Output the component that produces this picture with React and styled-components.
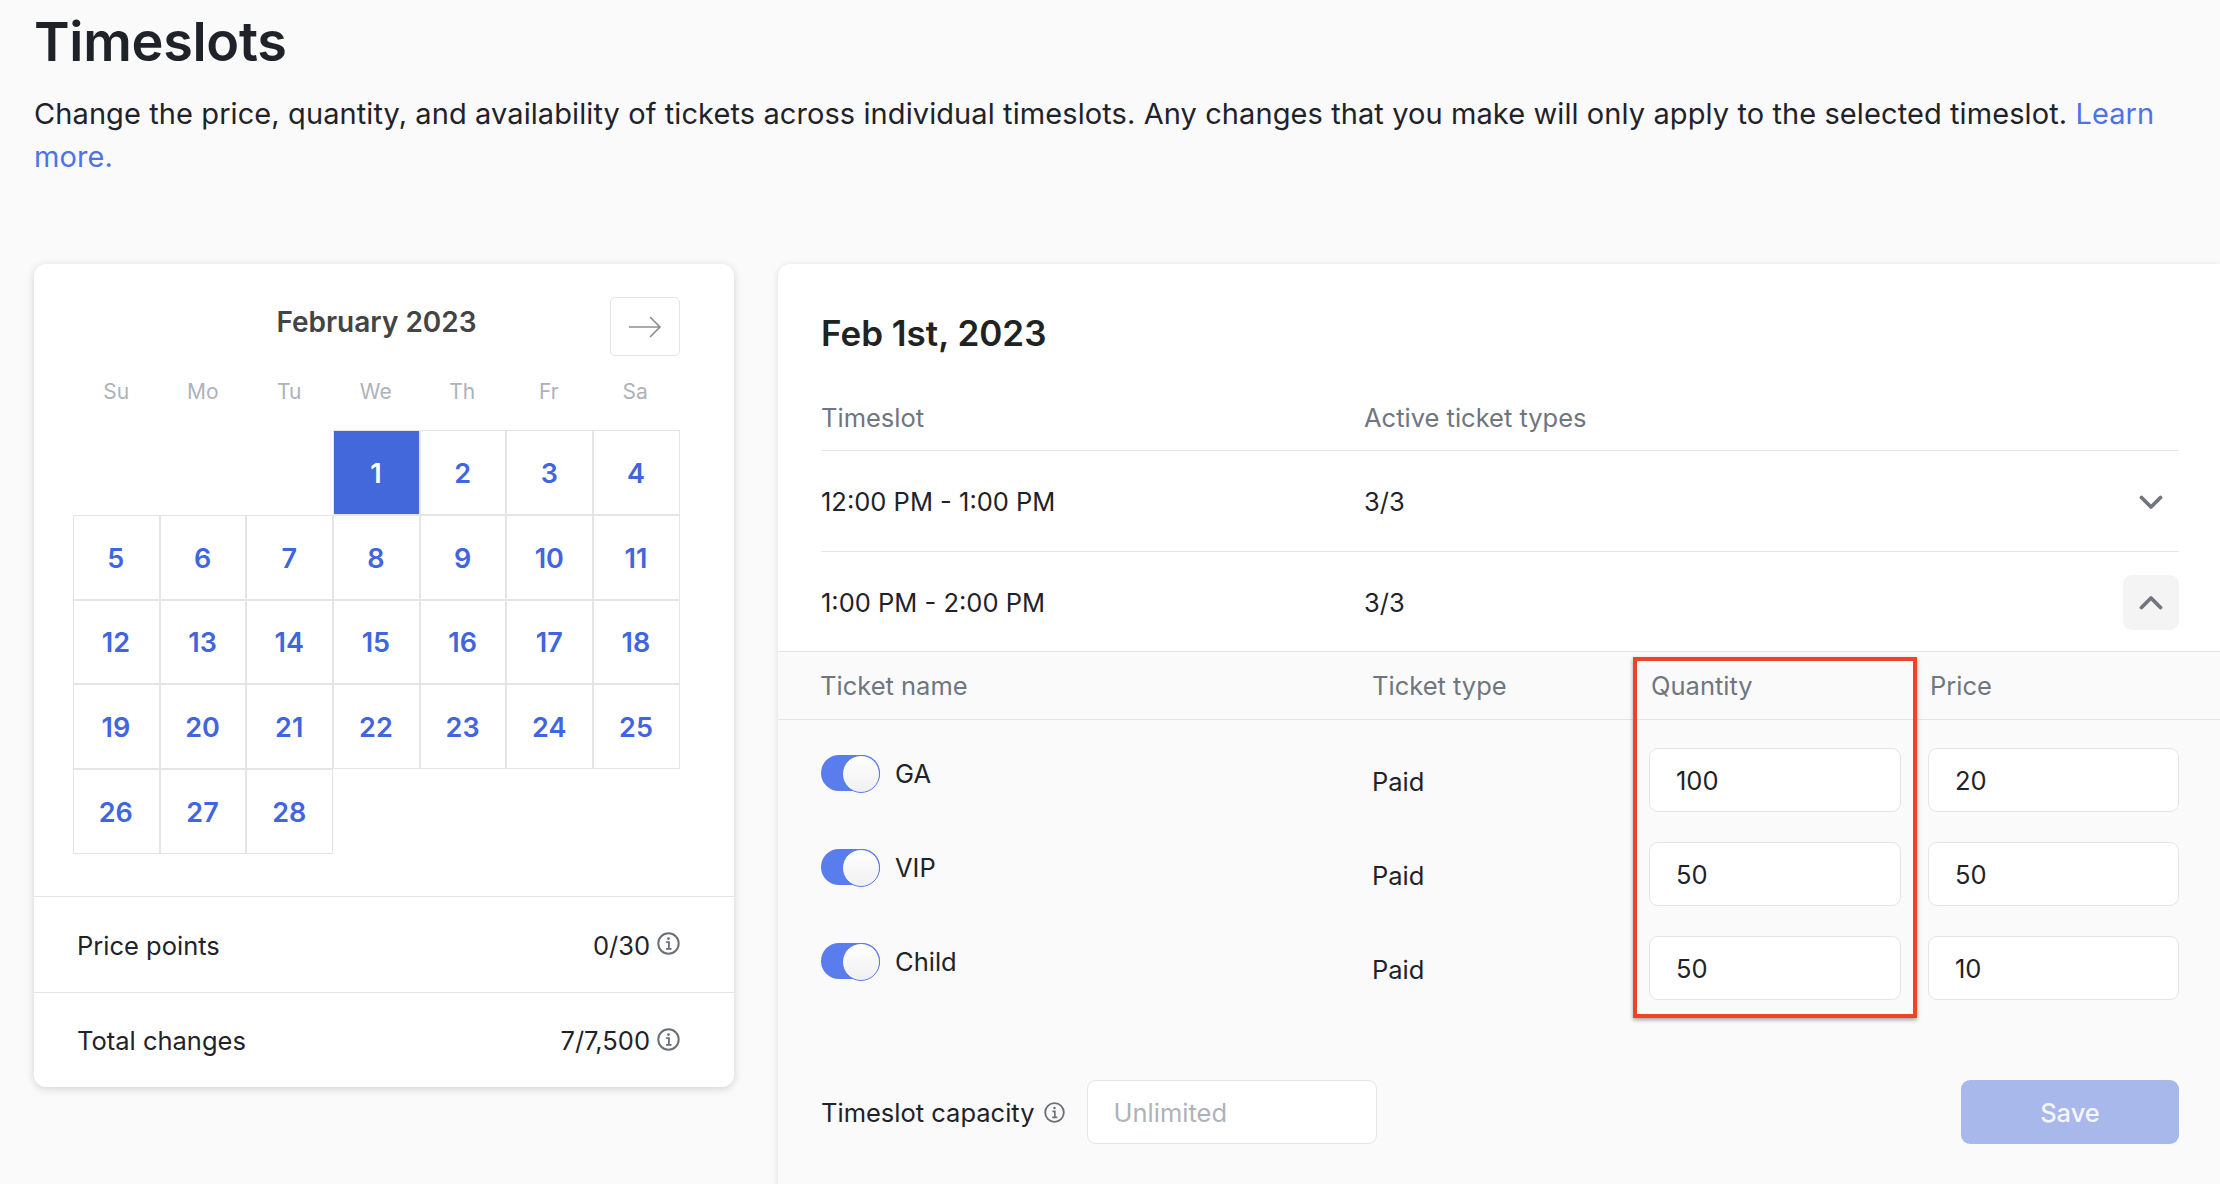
import React from 'react'
import styled, { createGlobalStyle } from 'styled-components'

const GlobalStyle = createGlobalStyle`
  html, body {
    margin: 0;
    background: #fafafa;
    overflow: hidden;
  }
  * {
    box-sizing: border-box;
  }
`

const Colors = {
  ink: '#1f2329',
  muted: '#6f7680',
  faint: '#aeb2b9',
  line: '#e5e5e5',
  blue: '#3f65e0',
}

const Page = styled.div`
  width: 2220px;
  height: 1184px;
  overflow: hidden;
  padding-left: 34px;
  background: #fafafa;
  color: ${Colors.ink};
  font-family: Inter, "Liberation Sans", sans-serif;
  font-size: 25.5px;
`

const Title = styled.h1`
  margin: 0;
  height: 92px;
  padding-top: 10px;
  font-size: 54px;
  line-height: 63px;
  font-weight: 600;
  letter-spacing: -0.3px;
`

const Intro = styled.p`
  margin: 0 0 86px;
  width: 2140px;
  font-size: 29px;
  line-height: 43px;
  letter-spacing: 0.09px;
`

const Link = styled.a`
  color: #4f73e6;
`

const Columns = styled.div`
  display: flex;
  align-items: flex-start;
  gap: 44px;
`

const CalendarCard = styled.section`
  flex: none;
  width: 700px;
  background: #fff;
  border-radius: 12px;
  box-shadow: 0 2px 8px rgba(0, 0, 0, 0.16);
`

const CalendarBody = styled.div`
  padding: 33px 54px 42px 39px;
`

const MonthBar = styled.div`
  display: grid;
  grid-template-columns: 1fr auto 1fr;
  align-items: center;
`

const MonthName = styled.div`
  grid-column: 2;
  margin-bottom: 10px;
  font-size: 28px;
  font-weight: 600;
  color: #444;
`

const ArrowButton = styled.button`
  grid-column: 3;
  justify-self: end;
  display: flex;
  align-items: center;
  justify-content: center;
  width: 70px;
  height: 59px;
  padding: 0;
  background: #fff;
  border: 1px solid ${Colors.line};
  border-radius: 5px;
`

const Weekdays = styled.div`
  display: grid;
  grid-template-columns: repeat(7, 86.5px);
  height: 74px;
  padding-bottom: 3px;
  align-items: center;
`

const Weekday = styled.div`
  text-align: center;
  font-size: 21px;
  color: ${Colors.faint};
`

const Days = styled.div`
  display: grid;
  grid-template-columns: repeat(7, 86.7px);
  grid-auto-rows: 84.8px;
`

const Day = styled.div`
  grid-column-start: ${(props) => props.$start || 'auto'};
  display: flex;
  align-items: center;
  justify-content: center;
  padding: 2px 1px 0 0;
  border: 1px solid ${Colors.line};
  font-size: 27px;
  font-weight: 600;
  background: ${(props) => (props.$selected ? '#4268dc' : '#fff')};
  color: ${(props) => (props.$selected ? '#fff' : Colors.blue)};
`

const Stat = styled.div`
  display: flex;
  align-items: center;
  justify-content: space-between;
  height: ${(props) => props.$height}px;
  padding: 2px 54px 0 43px;
  border-top: 1px solid ${Colors.line};
`

const StatValue = styled.div`
  display: flex;
  align-items: center;
  gap: 7px;

  svg {
    margin-bottom: 3px;
  }
`

const DetailCard = styled.section`
  flex: none;
  width: 1442px;
  background: #fff;
  border-radius: 12px 0 0 0;
  box-shadow: 0 1px 6px rgba(0, 0, 0, 0.12);
`

const DetailHead = styled.div`
  padding: 47px 41px 0 43px;
`

const DateTitle = styled.h2`
  margin: 0 0 29px;
  font-size: 35px;
  line-height: 44px;
  font-weight: 600;
  color: #222;
`

const SlotRow = styled.div`
  display: grid;
  grid-template-columns: 543px 1fr 56px;
  align-items: center;
  height: ${(props) => props.$height}px;
  padding-top: ${(props) => (props.$flat ? '2px' : '0')};
  color: ${(props) => (props.$head ? Colors.muted : Colors.ink)};
  border-bottom: ${(props) => (props.$flat ? 'none' : `1px solid ${Colors.line}`)};
`

const ChevronButton = styled.div`
  display: flex;
  align-items: center;
  justify-content: center;
  width: 56px;
  height: 55px;
  padding-top: ${(props) => (props.$open ? '0' : '3px')};
  border-radius: 9px;
  background: ${(props) => (props.$open ? '#f4f4f4' : 'transparent')};
`

const TicketSection = styled.div`
  position: relative;
  background: #fafafa;
  border-top: 1px solid ${Colors.line};
  padding-bottom: 60px;
`

const TicketHead = styled.div`
  display: grid;
  grid-template-columns: 552px 279px 279px 1fr;
  align-items: center;
  height: 68px;
  padding-left: 42px;
  color: ${Colors.muted};
  border-bottom: 1px solid ${Colors.line};
`

const TicketList = styled.div`
  display: grid;
  row-gap: 30px;
  padding: 28px 41px 0 43px;
`

const TicketRow = styled.div`
  display: grid;
  grid-template-columns: 551px 277px 1fr;
  height: 64px;
`

const TicketName = styled.div`
  display: flex;
  align-items: center;
  gap: 15px;
  height: 36px;
  margin-top: 7px;
`

const TicketType = styled.div`
  display: flex;
  align-items: center;
  padding-top: 2px;
`

const FieldPair = styled.div`
  display: grid;
  grid-template-columns: 252px 251px;
  column-gap: 27px;
`

const Toggle = styled.div`
  position: relative;
  flex: none;
  width: 59px;
  height: 36px;
  border-radius: 18px;
  background: #5a7ded;

  &::after {
    content: '';
    position: absolute;
    top: 0;
    right: 0;
    width: 36px;
    height: 36px;
    border-radius: 50%;
    border: 1px solid #5a7ded;
    background: linear-gradient(#ffffff, #f0f0f0);
  }
`

const Field = styled.input`
  display: block;
  width: ${(props) => props.$width || '100%'};
  height: 64px;
  padding: 1px 26px 0;
  background: #fff;
  border: 1px solid ${Colors.line};
  border-radius: 9px;
  outline: none;
  color: ${Colors.ink};
  font-family: inherit;
  font-size: 25.5px;

  &::placeholder {
    color: ${Colors.faint};
    opacity: 1;
  }
`

const CapacityBar = styled.div`
  display: flex;
  align-items: center;
  justify-content: space-between;
  margin-top: 80px;
  padding: 0 41px 0 43px;
`

const Capacity = styled.div`
  display: flex;
  align-items: center;
`

const CapacityLabel = styled.span`
  margin-right: 9px;
`

const CapacityField = styled(Field)`
  margin-left: 22px;
`

const SaveButton = styled.button`
  width: 218px;
  height: 64px;
  border: none;
  border-radius: 9px;
  background: #a9b8ea;
  color: #f4f6fe;
  font-family: inherit;
  font-size: 25.5px;
  font-weight: 500;
`

// the annotation somebody drew on top of the screenshot
const Highlight = styled.div`
  position: absolute;
  top: 5px;
  left: 855px;
  width: 284px;
  height: 361px;
  border: 4px solid #ee4325;
  box-shadow: 0 2px 4px rgba(0, 0, 0, 0.35);
  pointer-events: none;
`

const ArrowIcon = () => (
  <svg width="34" height="24" viewBox="0 0 34 24" fill="none" stroke="#8a8d92" strokeWidth="1.6">
    <path d="M1 12H32M22 2L32 12L22 22" />
  </svg>
)

const InfoIcon = ({ size = 23 }) => (
  <svg width={size} height={size} viewBox="0 0 23 23" fill="none" stroke="#6a7078">
    <circle cx="11.5" cy="11.5" r="10.2" strokeWidth="2" />
    <circle cx="11.5" cy="6.6" r="1.4" fill="#6a7078" stroke="none" />
    <path d="M9.2 10.2H11.9V16.6M9 16.8H14.6" strokeWidth="1.8" />
  </svg>
)

const Chevron = ({ up }) => (
  <svg width="24" height="15" viewBox="0 0 24 15" fill="none" stroke="#6f7680" strokeWidth="3.8" strokeLinecap="round" strokeLinejoin="round">
    <path d={up ? 'M2.5 12.5L12 3L21.5 12.5' : 'M2.5 2.5L12 12L21.5 2.5'} />
  </svg>
)

const weekdays = ['Su', 'Mo', 'Tu', 'We', 'Th', 'Fr', 'Sa']
const days = Array.from({ length: 28 }, (_, i) => i + 1)

const tickets = [
  { name: 'GA', quantity: '100', price: '20' },
  { name: 'VIP', quantity: '50', price: '50' },
  { name: 'Child', quantity: '50', price: '10' },
]

const App = () => {
  return (
    <Page>
      <GlobalStyle />
      <Title>Timeslots</Title>
      <Intro>
        Change the price, quantity, and availability of tickets across individual timeslots. Any changes that you make will only apply to the selected timeslot. <Link>Learn more.</Link>
      </Intro>
      <Columns>
        <CalendarCard>
          <CalendarBody>
            <MonthBar>
              <MonthName>February 2023</MonthName>
              <ArrowButton><ArrowIcon /></ArrowButton>
            </MonthBar>
            <Weekdays>
              {weekdays.map((day) => <Weekday key={day}>{day}</Weekday>)}
            </Weekdays>
            <Days>
              {days.map((day) => (
                <Day key={day} $start={day === 1 ? 4 : undefined} $selected={day === 1}>{day}</Day>
              ))}
            </Days>
          </CalendarBody>
          <Stat $height={96}>
            Price points
            <StatValue>0/30 <InfoIcon /></StatValue>
          </Stat>
          <Stat $height={95}>
            Total changes
            <StatValue>7/7,500 <InfoIcon /></StatValue>
          </Stat>
        </CalendarCard>
        <DetailCard>
          <DetailHead>
            <DateTitle>Feb 1st, 2023</DateTitle>
            <SlotRow $head $height={67}>
              <div>Timeslot</div>
              <div>Active ticket types</div>
            </SlotRow>
            <SlotRow $height={101}>
              <div>12:00 PM - 1:00 PM</div>
              <div>3/3</div>
              <ChevronButton><Chevron /></ChevronButton>
            </SlotRow>
            <SlotRow $flat $height={99}>
              <div>1:00 PM - 2:00 PM</div>
              <div>3/3</div>
              <ChevronButton $open><Chevron up /></ChevronButton>
            </SlotRow>
          </DetailHead>
          <TicketSection>
            <TicketHead>
              <div>Ticket name</div>
              <div>Ticket type</div>
              <div>Quantity</div>
              <div>Price</div>
            </TicketHead>
            <TicketList>
              {tickets.map((ticket) => (
                <TicketRow key={ticket.name}>
                  <TicketName>
                    <Toggle />
                    {ticket.name}
                  </TicketName>
                  <TicketType>Paid</TicketType>
                  <FieldPair>
                    <Field value={ticket.quantity} readOnly />
                    <Field value={ticket.price} readOnly />
                  </FieldPair>
                </TicketRow>
              ))}
            </TicketList>
            <CapacityBar>
              <Capacity>
                <CapacityLabel>Timeslot capacity</CapacityLabel>
                <InfoIcon size={21} />
                <CapacityField $width="290px" placeholder="Unlimited" readOnly />
              </Capacity>
              <SaveButton>Save</SaveButton>
            </CapacityBar>
            <Highlight />
          </TicketSection>
        </DetailCard>
      </Columns>
    </Page>
  )
}

export default App
